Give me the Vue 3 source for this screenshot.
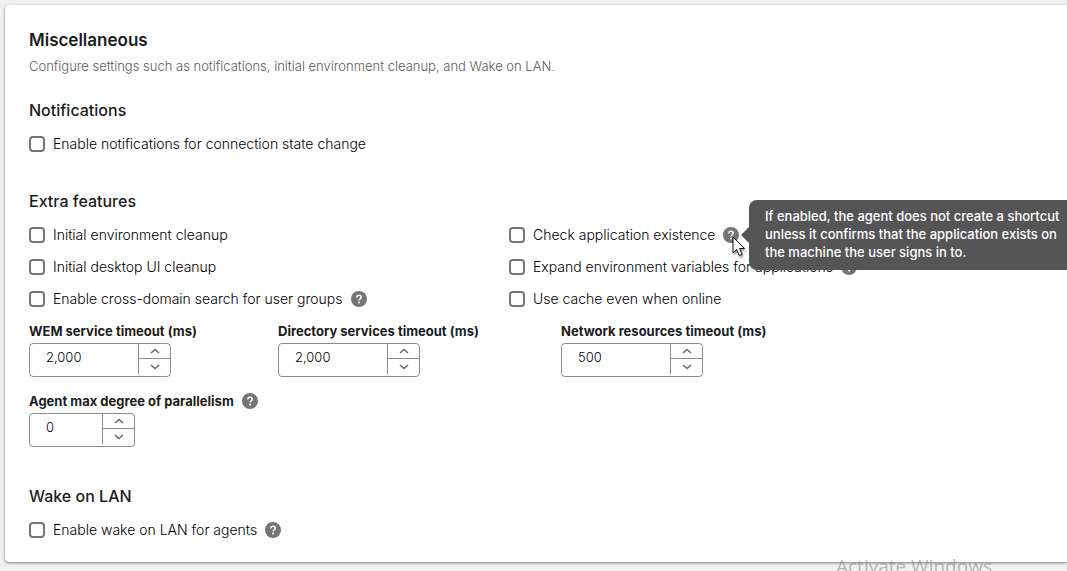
<script setup>
import { reactive } from 'vue'

const extraFeatures = reactive([
  { id: 'env', label: 'Initial environment cleanup', on: false },
  { id: 'exists', label: 'Check application existence', on: false, help: true, open: true },
  { id: 'desktop', label: 'Initial desktop UI cleanup', on: false },
  { id: 'expand', label: 'Expand environment variables for applications', on: false, help: true },
  { id: 'search', label: 'Enable cross-domain search for user groups', on: false, help: true },
  { id: 'cache', label: 'Use cache even when online', on: false }
])

const fields = reactive([
  { id: 'wem', label: 'WEM service timeout (ms)', value: 2000, step: 100 },
  { id: 'directory', label: 'Directory services timeout (ms)', value: 2000, step: 100 },
  { id: 'network', label: 'Network resources timeout (ms)', value: 500, step: 100 },
  { id: 'parallel', label: 'Agent max degree of parallelism', value: 0, step: 1, help: true, narrow: true }
])

const toggles = reactive({ notify: false, wake: false })

const format = (n) => n.toLocaleString('en-US')
const change = (f, dir) => {
  f.value = Math.max(0, f.value + dir * f.step)
}
const setValue = (f, e) => {
  f.value = Number(e.target.value.replace(/\D/g, '')) || 0
}
</script>

<template>
  <div class="page">
    <svg class="defs" aria-hidden="true">
      <symbol id="help" viewBox="0 0 16 16">
        <circle cx="8" cy="8" r="8" fill="#757575" />
        <path d="M5.8 6.4C5.8 5 6.7 4.2 8 4.2s2.2.8 2.2 2c0 1.6-2.1 1.6-2.1 3.2" fill="none" stroke="#fff" stroke-width="1.5" />
        <circle cx="8.1" cy="11.4" r="1" fill="#fff" />
      </symbol>
    </svg>

    <main class="card">
      <h1>Miscellaneous</h1>
      <p class="intro">Configure settings such as notifications, initial environment cleanup, and Wake on LAN.</p>

      <section class="notifications">
        <h2>Notifications</h2>
        <div class="option">
          <input id="notify" v-model="toggles.notify" type="checkbox" />
          <label for="notify">Enable notifications for connection state change</label>
        </div>
      </section>

      <section class="extra">
        <h2>Extra features</h2>
        <div class="options">
          <div v-for="o in extraFeatures" :key="o.id" class="option">
            <input :id="o.id" v-model="o.on" type="checkbox" />
            <label :for="o.id">{{ o.label }}</label>
            <button v-if="o.help" class="help" type="button" aria-label="Help">
              <svg><use href="#help" /></svg>
            </button>
            <div v-if="o.open" class="tooltip" role="tooltip">
              If enabled, the agent does not create a shortcut<br />
              unless it confirms that the application exists on<br />
              the machine the user signs in to.
            </div>
            <svg v-if="o.open" class="pointer" viewBox="0 0 14 22" aria-hidden="true">
              <path d="M1 1v16l3.7-3.5 2.6 6 2.8-1.2-2.6-5.8h5z" fill="#fff" stroke="#111" stroke-width="1" />
            </svg>
          </div>
        </div>

        <div class="fields">
          <div v-for="f in fields" :key="f.id" class="field">
            <div class="caption">
              <label :for="f.id">{{ f.label }}</label>
              <button v-if="f.help" class="help" type="button" aria-label="Help">
                <svg><use href="#help" /></svg>
              </button>
            </div>
            <div class="number" :class="{ narrow: f.narrow }">
              <input :id="f.id" type="text" inputmode="numeric" :value="format(f.value)" @change="setValue(f, $event)" />
              <div class="steps">
                <button type="button" aria-label="Increase" @click="change(f, 1)">
                  <svg viewBox="0 0 10 6"><path d="M1 5l4-3.6L9 5" /></svg>
                </button>
                <button type="button" aria-label="Decrease" @click="change(f, -1)">
                  <svg viewBox="0 0 10 6"><path d="M1 1l4 3.6L9 1" /></svg>
                </button>
              </div>
            </div>
          </div>
        </div>
      </section>

      <section class="wake">
        <h2>Wake on LAN</h2>
        <div class="option">
          <input id="wake" v-model="toggles.wake" type="checkbox" />
          <label for="wake">Enable wake on LAN for agents</label>
          <button class="help" type="button" aria-label="Help">
            <svg><use href="#help" /></svg>
          </button>
        </div>
      </section>
    </main>

    <div class="watermark">Activate Windows</div>
  </div>
</template>

<style>
body {
  background: #f1f1f1;
}
</style>

<style scoped>
.page {
  position: relative;
  box-sizing: border-box;
  min-height: 100vh;
  padding: 5px 0 9px 5px;
  overflow: hidden;
  color: #1c1c1c;
  background: #f1f1f1;
  font-family: Inter, "Liberation Sans", sans-serif;
  font-size: 14px;
}

.defs {
  position: absolute;
  width: 0;
  height: 0;
}

.card {
  padding: 24px 24px 16px;
  border-radius: 4px 0 0 4px;
  background: #fff;
  box-shadow: 0 1px 3px rgba(0, 0, 0, 0.5);
}

h1,
h2,
p {
  margin: 0;
}

h1 {
  font-size: 17px;
  font-weight: 600;
  line-height: 22px;
}

h2 {
  margin-bottom: 8px;
  font-size: 16px;
  font-weight: 500;
  line-height: 20px;
}

.intro {
  margin-top: 5px;
  color: #5c5c5c;
  font-size: 13px;
  font-weight: 300;
  line-height: 20px;
}

.notifications {
  margin-top: 24px;
}

.extra {
  margin-top: 31px;
}

.wake {
  margin-top: 39px;
}

.options {
  display: grid;
  grid-template-columns: 480px 1fr;
}

.option {
  position: relative;
  display: flex;
  align-items: center;
  gap: 8px;
  height: 32px;
  color: #000;
  font-weight: 300;
  white-space: nowrap;
}

.option label {
  line-height: 18px;
}

.option input {
  appearance: none;
  width: 16px;
  height: 16px;
  margin: 0;
  border: 2px solid #757575;
  border-radius: 4px;
  background: #fff;
}

.option input:checked {
  background: #757575;
}

.help {
  flex: none;
  width: 16px;
  height: 16px;
  padding: 0;
  border: 0;
  border-radius: 50%;
  background: none;
}

.help svg {
  display: block;
  width: 16px;
  height: 16px;
}

.tooltip {
  position: absolute;
  z-index: 2;
  top: -19px;
  left: 240px;
  width: 320px;
  padding: 7px 16px 9px;
  border-radius: 8px;
  color: #fff;
  background: #555;
  font-size: 13px;
  font-weight: 500;
  line-height: 18px;
}

.tooltip::before {
  position: absolute;
  top: 27px;
  left: -8px;
  border: solid transparent;
  border-width: 8px 8px 8px 0;
  border-right-color: #555;
  content: "";
}

.pointer {
  position: absolute;
  z-index: 3;
  top: 17px;
  left: 223px;
  width: 14px;
  height: 22px;
  filter: drop-shadow(1px 2px 1px rgba(0, 0, 0, 0.4));
}

.fields {
  display: grid;
  grid-template-columns: 249px 283px 1fr;
  row-gap: 14px;
  padding-top: 6px;
}

.caption {
  display: flex;
  align-items: center;
  gap: 8px;
  margin-bottom: 2px;
  font-size: 13px;
  font-weight: 700;
  line-height: 20px;
  white-space: nowrap;
}

.number {
  display: flex;
  box-sizing: border-box;
  width: 142px;
  height: 34px;
  padding-bottom: 2px;
  border: 1px solid #8c8c8c;
  border-radius: 4px;
}

.number.narrow {
  width: 106px;
}

.number input {
  flex: 1;
  min-width: 0;
  padding: 0 0 4px 16px;
  border: 0;
  outline: 0;
  color: #000;
  background: none;
  font-family: inherit;
  font-size: 13px;
  font-weight: 300;
}

.steps {
  display: flex;
  flex-direction: column;
  width: 31px;
  border-left: 1px solid #8c8c8c;
}

.steps button {
  display: flex;
  flex: none;
  align-items: center;
  justify-content: center;
  box-sizing: border-box;
  height: 15px;
  padding: 0;
  border: 0;
  background: none;
}

.steps button:first-child {
  border-bottom: 1px solid #8c8c8c;
}

.steps svg {
  width: 10px;
  height: 6px;
  fill: none;
  stroke: #666;
  stroke-width: 1.5;
}

.watermark {
  position: absolute;
  top: 553px;
  left: 836px;
  color: rgba(120, 120, 120, 0.5);
  font-family: "Open Sans", sans-serif;
  font-size: 19px;
  line-height: 26px;
  white-space: nowrap;
}
</style>
